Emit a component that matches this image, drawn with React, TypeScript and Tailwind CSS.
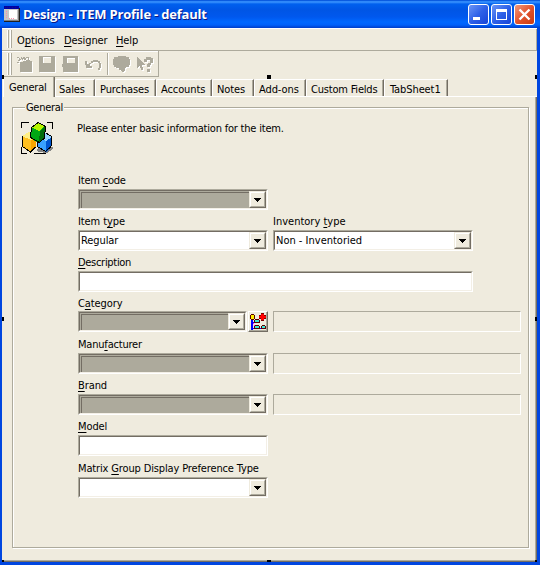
import React from "react";

type LabelProps = { text: string; hot?: number; className?: string };

// Caption with an underlined access key at index `hot`.
function Caption({ text, hot = -1, className = "" }: LabelProps) {
  return (
    <span className={`inline-block whitespace-pre leading-[14px] ${className}`}>
      {hot < 0 ? (
        text
      ) : (
        <>
          {text.slice(0, hot)}
          <span className="underline decoration-1 underline-offset-[2px] [text-decoration-skip-ink:none]">{text[hot]}</span>
          {text.slice(hot + 1)}
        </>
      )}
    </span>
  );
}

function Grip() {
  return (
    <div className="flex gap-px">
      <i className="block w-[2px] border-l border-white border-r border-r-[#adaa9c]" />
      <i className="block w-[2px] border-l border-white border-r border-r-[#adaa9c]" />
    </div>
  );
}

function Sunken({ className, children }: { className: string; children?: React.ReactNode }) {
  return (
    <div className={`h-[21px] shrink-0 border border-t-[#adaa9c] border-l-[#adaa9c] border-r-white border-b-white ${className}`}>
      <div className="flex h-full border border-t-[#736d63] border-l-[#736d63] border-r-[#f3efe6] border-b-[#f3efe6]">{children}</div>
    </div>
  );
}

function Combo({ width, value = "", disabled = false, textClass = "" }: { width: string; value?: string; disabled?: boolean; textClass?: string }) {
  return (
    <Sunken className={`${width} ${disabled ? "bg-[#adaa9c]" : "bg-white"}`}>
      <div className={`flex min-w-0 flex-1 items-start pl-px ${disabled ? "mt-px ml-px border-t border-l border-[#736d63]" : "pt-[2px]"}`}>
        {value && <Caption text={value} className={textClass} />}
      </div>
      <div className="h-[17px] w-[17px] shrink-0 border border-t-[#efebde] border-l-[#efebde] border-r-[#736d63] border-b-[#736d63]">
        <div className="flex h-full items-center justify-center border border-t-white border-l-white border-r-[#adaa9c] border-b-[#adaa9c] bg-[#efebde]">
          <svg width="7" height="4" shapeRendering="crispEdges">
            <path d="M0 0h7v1H6v1H5v1H4v1H3V3H2V2H1V1H0z" />
          </svg>
        </div>
      </div>
    </Sunken>
  );
}

function ReadOnly() {
  return <div className="ml-[5px] h-[21px] w-[248px] border border-t-[#adaa9c] border-l-[#adaa9c] border-r-white border-b-white" />;
}

type FieldProps = { label: string; hot: number; height?: string; gap?: string; className?: string; children: React.ReactNode };

function Field({ label, hot, height = "h-[41px]", gap = "mb-0", className = "", children }: FieldProps) {
  return (
    <div className={`flex flex-col justify-end ${height}`}>
      <div className={`flex h-[16px] items-center ${gap}`}>
        <Caption text={label} hot={hot} className={className} />
      </div>
      <div className="flex">{children}</div>
    </div>
  );
}

function Toolbar() {
  return (
    <div className="flex h-[26px] w-[157px] border-r border-b border-[#adaa9c] pt-[2px] pb-[1px] pl-[5px] shadow-[inset_0_1px_0_#fff]">
      <Grip />
      <svg className="ml-[4px]" width="140" height="22" viewBox="16 53 140 22" shapeRendering="crispEdges">
        {["#fff", "#adaa9c"].map((c, i) => (
          <g key={c} fill={c} transform={i === 0 ? "translate(1 1)" : undefined}>
            <path d="M20 62h3v-1h3v-1h4v1h2v11H20zM17 57h2v1h-2zM19 58h1v1h1v1h-1v1h-2v-1h1zM21 57h1v1h1v-1h2v1h-1v1h-1v1h-1v-1h-1zM17 62h2v1h-2zM24 58h2v2h-2zM26 57h3v1h-3zM28 58h1v2h-1z" />
            <path fillRule="evenodd" d="M39 56h16v16H39zM43 57v6h8v-6z" />
            <path fillRule="evenodd" d="M63 56h15v16H63v-5h-1v-3h1zM67 58v5h8v-5z" />
            <path d="M85 61h2v3h2v-1h2v-2h2v-1h5v1h2v2h1v5h-1v2h-2v-2h1v-5h-1v-1h-5v1h-2v1h-1v2h2v2h-6z" />
            <path d="M118 56h8v1h3v2h1v6h-1v2h-3v1h-1v3h-1v1h-2v-1h-1v-1h-2v-2h-3v-1h-2v-2h-1v-6h1v-2h3z" />
            <path d="M137 57h1v1h1v1h1v1h1v1h1v1h1v1h1v1h1v1h-3v2h1v3h-2v-2h-1v-2h-1v1h-1v1h-1z" />
            <path d="M146 57h5v1h2v5h-2v2h-1v2h-3v-3h1v-1h2v-3h-3v2h-3v-3h2zM147 69h3v3h-3z" />
          </g>
        ))}
        <path fill="#adaa9c" d="M107 53h1v22h-1z" />
        <path fill="#fff" d="M108 53h1v22h-1z" />
      </svg>
    </div>
  );
}

function Tab({ text, width, className = "" }: { text: string; width: string; className?: string }) {
  return (
    <div className={`mt-[2px] flex h-[17px] rounded-tl-[2px] border-t border-l border-white border-r border-r-[#736d63] shadow-[inset_-1px_0_0_#adaa9c] ${width} ${className}`}>
      <Caption text={text} className="mt-[3px]" />
    </div>
  );
}

function Cubes() {
  return (
    <svg width="34" height="33" viewBox="20 120 34 33" shapeRendering="crispEdges">
      <path fill="none" stroke="#000" d="M21.500 127v-5.500h7M47 121.500h5.500v6M21.500 146v6.500h5M34 152.500h12" />
      <path fill="#848484" d="M36 149l4-4 13 1v2l-6 4-8-1z" />
      <path fill="#ffc021" d="M22 135l7-4 7 4v11l-6 5-8-5z" />
      <path fill="#f7a500" d="M31 139l5-3v10l-5 5z" />
      <path fill="#ffef84" d="M22 135l7-4 7 4-5 4z" />
      <path fill="none" stroke="#000" d="M22.500 135v10.500l8 5.500 5-5" />
      <path fill="#39a2ff" d="M37 137l8-5 7 4-1 10-5 5-9-5z" />
      <path fill="#0055ce" d="M46 140l6-4-1 10-5 5z" />
      <path fill="#94d3ff" d="M37 136l8-4 7 4-6 4z" />
      <path fill="none" stroke="#000" d="M46.500 132.500l5.500 3-1 10-5.500 5-8-5v-7" />
      <path fill="#00a614" d="M31 127l7-5 7 4-1 11-5 5-9-5z" />
      <path fill="#006d0c" d="M40 130l5-4-1 11-5 4z" />
      <path fill="#b5f500" d="M31 126l7-4 7 3-6 5z" />
      <path fill="none" stroke="#000" d="M31.500 126.500l6.500-5 7.500 4-1 11.500-5 4.500-9-5z" />
    </svg>
  );
}

function TreeButton() {
  return (
    <div className="ml-px h-[21px] w-[20px] border border-t-white border-l-white border-r-[#736d63] border-b-[#736d63]">
      <div className="h-full border-r border-b border-[#adaa9c]">
        <svg width="17" height="18" viewBox="249 312 17 18" shapeRendering="crispEdges">
          <path fill="#0000ff" d="M251 319h2v11h-2zM253 322h3v1h-3zM253 328h9v1h-9z" />
          <path fill="#ff00ff" d="M253 323h1v1h-1zM254 325h1v1h-1z" />
          <path fill="#5a0000" d="M251 314h3v1h1v4h-1v1h-3v-1h-1v-4h1zM255 319h4v1h1v3h-6v-3h1zM255 325h4v1h1v3h-6v-3h1zM262 325h3v1h1v3h-5v-3h1z" />
          <path fill="#ffef00" d="M251 315h3v4h-3z" />
          <path fill="#39e7d6" d="M255 320h4v2h-4zM255 326h4v2h-4zM262 326h3v2h-3z" />
          <path fill="#7b0000" d="M261 313h3v2h2v4h-2v2h-3v-2h-2v-4h2z" />
          <path fill="#ff0000" d="M261 314h3v2h2v2h-2v2h-3v-2h-2v-2h2z" />
        </svg>
      </div>
    </div>
  );
}

function WindowButton({ kind }: { kind: "min" | "max" | "close" }) {
  return (
    <div className={`flex h-[21px] w-[21px] items-center justify-center rounded-[3px] border border-white bg-gradient-to-br ${kind === "close" ? "from-[#f0987a] via-[#e2532c] to-[#c83a10]" : "from-[#6c94f5] via-[#2e60e8] to-[#1744d8]"}`}>
      <svg width="19" height="19" shapeRendering="crispEdges">
        {kind === "min" && <path fill="#fff" d="M4 12h7v3H4z" />}
        {kind === "max" && <path fill="#fff" fillRule="evenodd" d="M4 4h11v11H4zM5 7v7h9V7z" />}
        {kind === "close" && <path stroke="#fff" strokeWidth="2.4" shapeRendering="auto" d="M4.500 4.500l10 10M14.500 4.500l-10 10" />}
      </svg>
    </div>
  );
}

export default function App() {
  return (
    <div className="relative flex h-[565px] w-[540px] flex-col overflow-hidden bg-[#0046e0] font-['DejaVu_Sans_Condensed','DejaVu_Sans',sans-serif] text-[11px] tracking-[-0.1px] text-black [font-stretch:condensed]">
      <header className="flex h-[28px] shrink-0 items-center bg-[linear-gradient(180deg,#0b64e8_0px,#3b94ff_2px,#0060ee_4px,#0055e5_10px,#0058ee_17px,#0068ff_22px,#0060fa_25px,#003dc8_28px)] pr-[5px] pl-[4px] shadow-[inset_0_1px_0_#0a5be0]">
        <svg width="16" height="16" shapeRendering="crispEdges">
          <path fill="#808080" d="M0 2h16v14H0z" />
          <path fill="#0000a5" d="M0 0h15v3H0z" />
          <path fill="#c6c6c6" d="M0 3h14v11H0z" />
          <path fill="#fff" d="M5 4h8v9H5z" />
          <path fill="#ff8cad" d="M2 5h1v1H2zM2 7h1v1H2zM2 9h1v1H2zM2 11h1v1H2zM5 12h1v1H5zM7 12h1v1H7zM9 12h1v1H9z" />
          <path fill="#18187b" d="M1 1h1v1H1zM3 1h1v1H3zM5 1h1v1H5zM8 1h1v1H8zM11 1h1v1h-1z" />
          <path fill="#202020" d="M15 2h1v14h-1zM0 15h16v1H0z" />
        </svg>
        <span className="ml-[3px] whitespace-pre font-['Open_Sans',sans-serif] text-[13px] leading-[20px] font-bold tracking-[-0.2px] text-white [font-stretch:normal] [text-shadow:1px_1px_0_#0a1883]">Design - ITEM Profile - default</span>
        <div className="ml-auto flex gap-[2px] pt-[1px]">
          <WindowButton kind="min" />
          <WindowButton kind="max" />
          <WindowButton kind="close" />
        </div>
      </header>

      <div className="mr-[3px] mb-[3px] ml-[2px] flex flex-1 flex-col bg-[#efebde]">
        <nav className="flex h-[23px] shrink-0 border-t border-white border-b border-b-[#adaa9c] pt-px pb-[2px] pl-[5px] shadow-[inset_-1px_0_0_#adaa9c]">
          <Grip />
          <div className="flex pt-[4px] pl-[5px]">
            <Caption text="Options" hot={1} className="w-[47px]" />
            <Caption text="Designer" hot={0} className="w-[52px]" />
            <Caption text="Help" hot={0} />
          </div>
        </nav>
        <Toolbar />

        <div className="flex h-[20px] shrink-0 pl-[1px]">
          <div className="flex h-[20px] w-[52px] border-l border-white border-r border-r-[#736d63] pl-[5px] shadow-[inset_-1px_0_0_#adaa9c]">
            <Caption text="General" className="mt-[4px] tracking-[-0.2px]" />
          </div>
          <div className="flex flex-1 border-b border-white">
            <Tab text="Sales" width="w-[40px]" className="pl-[3px]" />
            <Tab text="Purchases" width="w-[61px]" className="pl-[4px]" />
            <Tab text="Accounts" width="w-[56px]" className="pl-[4px]" />
            <Tab text="Notes" width="w-[42px]" className="pl-[4px]" />
            <Tab text="Add-ons" width="w-[52px]" className="pl-[4px]" />
            <Tab text="Custom Fields" width="w-[78px]" className="pl-[4px] tracking-[-0.2px]" />
            <Tab text="TabSheet1" width="w-[64px]" className="pl-[5px]" />
          </div>
        </div>

        <main className="flex-1 border-r border-b border-[#736d63] pt-[10px] pr-[7px] pb-[13px] pl-[10px] shadow-[inset_-1px_-1px_0_#adaa9c]">
          <div className="h-full border border-[#adaa9c] shadow-[inset_1px_1px_0_#fff,1px_1px_0_#fff]">
            <div className="-mt-[7px] flex h-[20px] pl-[12px]">
              <Caption text="General" className="h-[14px] bg-[#efebde] px-px tracking-[-0.3px]" />
            </div>
            <div className="flex">
              <div className="w-[65px] shrink-0 pl-[7px]">
                <Cubes />
              </div>
              <div className="flex flex-col">
                <Caption text="Please enter basic information for the item." className="mt-px -ml-px h-[47px] tracking-[-0.2px]" />
                <Field label="Item code" hot={5} className="tracking-[-0.2px]"><Combo width="w-[190px]" disabled /></Field>
                <div className="flex gap-[5px]">
                  <Field label="Item type" hot={6}><Combo width="w-[190px]" value="Regular" /></Field>
                  <Field label="Inventory type" hot={10} className="tracking-normal"><Combo width="w-[200px]" value="Non - Inventoried" textClass="tracking-normal" /></Field>
                </div>
                <Field label="Description" hot={0} className="tracking-[-0.3px]"><Sunken className="w-[395px] bg-white" /></Field>
                <Field label="Category" hot={1} height="h-[40px]" gap="-mb-px"><Combo width="w-[169px]" disabled /><TreeButton /><ReadOnly /></Field>
                <Field label="Manufacturer" hot={4} height="h-[42px]" className="tracking-[-0.2px]"><Combo width="w-[190px]" disabled /><ReadOnly /></Field>
                <Field label="Brand" hot={0}><Combo width="w-[190px]" disabled /><ReadOnly /></Field>
                <Field label="Model" hot={0}><Sunken className="w-[190px] bg-white" /></Field>
                <Field label="Matrix Group Display Preference Type" hot={7} height="h-[42px]" className="tracking-[-0.14px]"><Combo width="w-[190px]" /></Field>
              </div>
            </div>
          </div>
        </main>
      </div>

      {/* Selection handles of the form designer */}
      <i className="absolute top-[75px] left-[2px] h-[4px] w-[2px] bg-black" />
      <i className="absolute top-[75px] left-[267px] h-[4px] w-[4px] bg-black" />
      <i className="absolute top-[75px] left-[535px] h-[4px] w-[2px] bg-black" />
      <i className="absolute top-[317px] left-[2px] h-[4px] w-[2px] bg-black" />
      <i className="absolute top-[317px] left-[535px] h-[4px] w-[2px] bg-black" />
      <i className="absolute top-[560px] left-[2px] h-[2px] w-[2px] bg-black" />
      <i className="absolute top-[560px] left-[267px] h-[2px] w-[4px] bg-black" />
      <i className="absolute top-[560px] left-[535px] h-[2px] w-[2px] bg-black" />
    </div>
  );
}
